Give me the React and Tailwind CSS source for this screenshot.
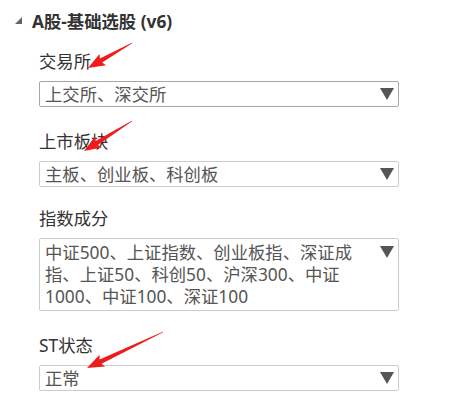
import React from "react";

const FONT = { fontFamily: '"Noto Sans", "Noto Sans CJK SC", sans-serif' };

function Caret() {
  return (
    <svg width="14" height="12" viewBox="0 0 14 12" className="shrink-0">
      <polygon points="0,0 14,0 7,12" fill="#555555" />
    </svg>
  );
}

function Arrow({ x1, y1, x2, y2 }) {
  const dx = x2 - x1;
  const dy = y2 - y1;
  const L = Math.sqrt(dx * dx + dy * dy);
  const ang = (Math.atan2(dy, dx) * 180) / Math.PI;
  const pts = [
    [0, -0.4],
    [L - 15, -2.3],
    [L - 17, -6.5],
    [L, 0],
    [L - 17, 6.5],
    [L - 15, 2.3],
    [0, 0.4],
  ]
    .map((p) => p.join(","))
    .join(" ");
  return (
    <polygon
      points={pts}
      fill="#ee1c1c"
      transform={`translate(${x1} ${y1}) rotate(${ang})`}
    />
  );
}

function Select({ value, dark }) {
  return (
    <div
      className={`flex items-center h-[26px] w-[360px] border rounded-[2px] pl-[5px] pr-[4px] ${
        dark ? "border-[#a6a6a6]" : "border-[#cccccc]"
      }`}
    >
      <span className="text-[17.33px] leading-[24px] text-[#555555] whitespace-nowrap">{value}</span>
      <span className="ml-auto flex">
        <Caret />
      </span>
    </div>
  );
}

function Field({ label, className, children }) {
  return (
    <div className={`flex flex-col gap-[8px] ${className || ""}`}>
      <div className="text-[17.33px] leading-[24px] text-[#333333]">{label}</div>
      {children}
    </div>
  );
}

export default function App() {
  const lines = [
    "中证500、上证指数、创业板指、深证成",
    "指、上证50、科创50、沪深300、中证",
    "1000、中证100、深证100",
  ];
  return (
    <div className="relative w-[452px] h-[406px] bg-white overflow-hidden" style={FONT}>
      <div className="flex items-center pt-[9px] pl-[15px]">
        <svg width="8" height="8" viewBox="0 0 8 8" className="mr-[9px]">
          <polygon points="7,0 7,7 0,7" fill="#646464" />
        </svg>
        <span className="text-[17.33px] leading-[24px] font-bold text-[#333333]">A股-基础选股 (v6)</span>
      </div>
      <div className="flex flex-col mt-[16px] pl-[39px]">
        <Field label="交易所">
          <Select value="上交所、深交所" dark />
        </Field>
        <Field label="上市板块" className="mt-[22px]">
          <Select value="主板、创业板、科创板" />
        </Field>
        <Field label="指数成分" className="mt-[19px]">
          <div className="flex items-start w-[360px] h-[73px] border border-[#cccccc] rounded-[2px] pl-[5px] pr-[4px] pt-[2px]">
            <div className="flex flex-col text-[17.33px] leading-[22px] text-[#555555]">
              {lines.map((l) => (
                <span key={l} className="whitespace-nowrap">
                  {l}
                </span>
              ))}
            </div>
            <span className="ml-auto flex h-[22px] items-center">
              <Caret />
            </span>
          </div>
        </Field>
        <Field label="ST状态" className="mt-[22px]">
          <Select value="正常" />
        </Field>
      </div>
      <svg
        className="absolute left-0 top-0 pointer-events-none"
        width="452"
        height="406"
        viewBox="0 0 452 406"
      >
        <Arrow x1={132} y1={43} x2={88} y2={68} />
        <Arrow x1={132} y1={121} x2={84} y2={151} />
        <Arrow x1={163} y1={332} x2={87} y2={368} />
      </svg>
    </div>
  );
}
